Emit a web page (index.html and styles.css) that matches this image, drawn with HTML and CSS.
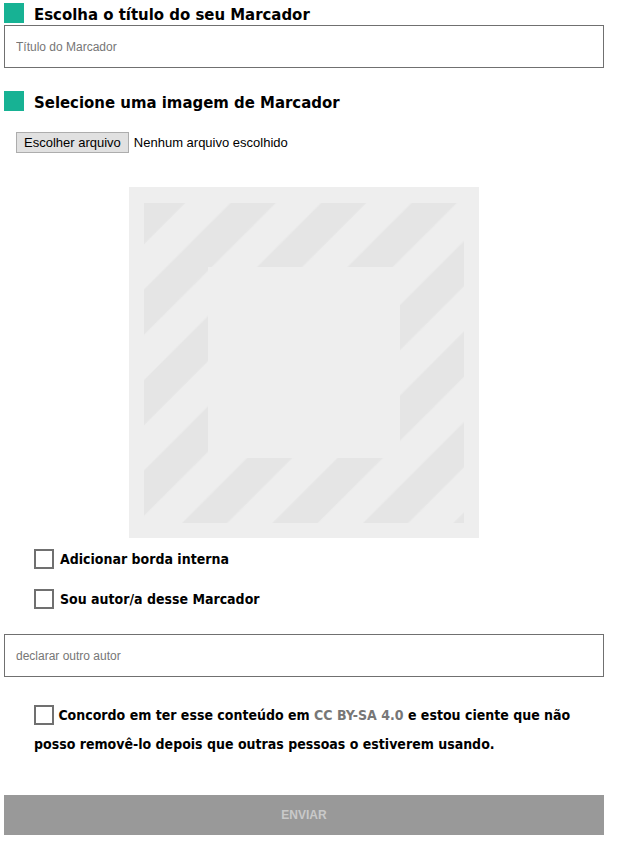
FILE: index.html
```html
<!DOCTYPE html>
<html lang="pt">
<head>
<meta charset="utf-8">
<title>Marcador</title>
<link rel="stylesheet" href="styles.css">
</head>
<body>
<form class="page">
  <h2 class="heading"><span class="mark"></span>Escolha o título do seu Marcador</h2>
  <input class="text-input" type="text" placeholder="Título do Marcador">

  <h2 class="heading heading-second"><span class="mark"></span>Selecione uma imagem de Marcador</h2>
  <div class="file-row">
    <button type="button" class="file-btn">Escolher arquivo</button>
    <span class="file-name">Nenhum arquivo escolhido</span>
  </div>

  <div class="preview">
    <svg width="350" height="351" viewBox="0 0 350 351" aria-hidden="true">
      <defs>
        <pattern id="stripes" patternUnits="userSpaceOnUse" width="90.5" height="90.5" patternTransform="translate(27 0)">
          <polygon points="0,0 45.25,0 0,45.25" fill="#e5e5e5"/>
          <polygon points="90.5,0 90.5,45.25 45.25,90.5 0,90.5" fill="#e5e5e5"/>
        </pattern>
        <mask id="ring">
          <rect x="15" y="16" width="320" height="320" fill="#fff"/>
          <rect x="79" y="80" width="192" height="191" fill="#000"/>
        </mask>
      </defs>
      <rect width="350" height="351" fill="#eeeeee"/>
      <rect x="15" y="16" width="320" height="320" fill="url(#stripes)" mask="url(#ring)"/>
    </svg>
  </div>

  <div class="checks">
    <label class="check"><span class="box"></span>Adicionar borda interna</label>
    <label class="check"><span class="box"></span>Sou autor/a desse Marcador</label>
  </div>

  <input class="text-input author" type="text" placeholder="declarar outro autor">

  <p class="agree"><span class="box box-inline"></span> Concordo em ter esse conteúdo em <a class="license">CC BY-SA 4.0</a> e estou ciente que não posso removê-lo depois que outras pessoas o estiverem usando.</p>

  <button type="button" class="submit">ENVIAR</button>
</form>
</body>
</html>
```

FILE: styles.css
```css
html, body {
  margin: 0;
  padding: 0;
  background: #ffffff;
}

.page {
  width: 600px;
  margin-left: 4px;
  display: flex;
  flex-direction: column;
  font-family: "DejaVu Sans", sans-serif;
  font-stretch: condensed;
  color: #000;
}

.heading {
  display: flex;
  align-items: flex-start;
  height: 25px;
  margin: 0;
  font-size: 16.6px;
  line-height: 29px;
  font-weight: bold;
}

.heading-second {
  margin-top: 20px;
}

.mark {
  flex: none;
  width: 20px;
  height: 20px;
  margin-top: 3px;
  margin-right: 10px;
  background: #17b294;
}

.text-input {
  box-sizing: border-box;
  display: block;
  width: 600px;
  height: 43px;
  margin: 0;
  padding: 0 11px;
  border: 1px solid #707070;
  border-radius: 0;
  font-family: "Liberation Sans", Arial, sans-serif;
  font-size: 12px;
  color: #000;
  outline: none;
}

.text-input::placeholder {
  color: #767676;
}

.file-row {
  display: flex;
  align-items: center;
  margin-top: 19px;
  padding-left: 12px;
  font-family: "Liberation Sans", Arial, sans-serif;
  font-size: 13px;
}

.file-btn {
  box-sizing: border-box;
  height: 21px;
  padding: 0 7px;
  margin: 0 5px 0 0;
  border: 1px solid #adadad;
  border-radius: 0;
  background: #e1e1e1;
  font-family: "Liberation Sans", Arial, sans-serif;
  font-size: 13px;
  color: #000;
}

.file-name {
  color: #000;
}

.preview {
  display: flex;
  justify-content: center;
  margin-top: 34px;
}

.preview svg {
  display: block;
}

.checks {
  display: flex;
  flex-direction: column;
  gap: 20px;
  margin-top: 11px;
  padding-left: 30px;
}

.check {
  display: flex;
  align-items: center;
  gap: 6px;
  height: 20px;
  font-size: 14px;
  font-weight: bold;
}

.box {
  box-sizing: border-box;
  flex: none;
  width: 20px;
  height: 20px;
  border: 2px solid #707070;
  background: #fff;
}

.author {
  margin-top: 25px;
}

.agree {
  margin: 24px 0 0;
  padding-left: 30px;
  font-size: 14px;
  font-weight: bold;
  line-height: 29px;
}

.box-inline {
  display: inline-block;
  vertical-align: middle;
  margin-top: -3px;
}

.license {
  color: #777777;
  text-decoration: none;
}

.submit {
  display: block;
  width: 600px;
  height: 40px;
  margin: 36px 0 0;
  border: none;
  border-radius: 0;
  background: #999999;
  color: #c9c9c9;
  font-family: "Liberation Sans", Arial, sans-serif;
  font-size: 12px;
  font-weight: bold;
}
```
